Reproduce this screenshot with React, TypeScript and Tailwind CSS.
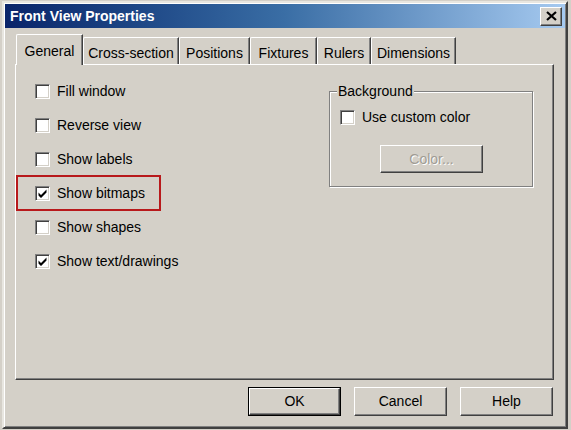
import React from 'react';

const FONT = { fontFamily: '"Liberation Sans", Arial, sans-serif' };

function Check({ checked }: { checked?: boolean }) {
  return (
    <span className="flex h-[15px] w-[15px] shrink-0 items-center justify-center border border-t-[#808080] border-l-[#808080] border-b-white border-r-white bg-white shadow-[inset_1px_1px_0_#404040,inset_-1px_-1px_0_#d4d0c8]">
      {checked && (
        <svg width="9" height="9" viewBox="0 0 9 9">
          <path d="M0.5 3.5 L3 6 L8.5 0.5 L8.5 3.5 L3 9 L0.5 6.5 Z" fill="#000" />
        </svg>
      )}
    </span>
  );
}

function Row({ label, checked, marked }: { label: string; checked?: boolean; marked?: boolean }) {
  return (
    <div className="relative flex h-[34px] items-center gap-[7px] text-[14px] text-black">
      {marked && (
        <span className="pointer-events-none absolute left-[-19px] top-[-1px] h-[36px] w-[145px] border-2 border-[#b8191b]" />
      )}
      <Check checked={checked} />
      <span>{label}</span>
    </div>
  );
}

function WinButton({ label, isDefault, disabled, className = '' }: { label: string; isDefault?: boolean; disabled?: boolean; className?: string }) {
  return (
    <div className={`${isDefault ? 'border border-black' : ''} ${className}`}>
      <div className="flex h-full w-full items-center justify-center border border-t-white border-l-white border-b-[#404040] border-r-[#404040] bg-[#d4d0c8] shadow-[inset_-1px_-1px_0_#808080] text-[14px]">
        <span className={disabled ? 'text-[#a09c94] [text-shadow:1px_1px_0_#fff]' : 'text-black'}>{label}</span>
      </div>
    </div>
  );
}

const tabs = [
  { name: 'General', w: 'w-[67px]' },
  { name: 'Cross-section', w: 'w-[96px]' },
  { name: 'Positions', w: 'w-[71px]' },
  { name: 'Fixtures', w: 'w-[67px]' },
  { name: 'Rulers', w: 'w-[54px]' },
  { name: 'Dimensions', w: 'w-[85px]' },
];

export default function App() {
  return (
    <div className="h-[430px] w-[571px] overflow-hidden bg-[#d4d0c8] pl-[2px] pt-[1px]" style={FONT}>
      <div className="flex h-[428px] w-[566px] flex-col border-2 border-t-[#e8e6e0] border-l-[#e8e6e0] border-b-[#404040] border-r-[#404040] bg-[#d4d0c8] p-[1px] shadow-[inset_1px_1px_0_#fff,inset_-1px_-1px_0_#808080]">
        {/* title bar */}
        <div className="flex h-[24px] shrink-0 items-center justify-between bg-gradient-to-r from-[#0a246a] via-[#3a6ea5] to-[#a6caf0] pl-[5px] pr-[3px]">
          <span className="text-[14px] font-bold text-white">Front View Properties</span>
          <div className="flex h-[19px] w-[22px] items-center justify-center border border-t-white border-l-white border-b-[#404040] border-r-[#404040] bg-[#d4d0c8] shadow-[inset_-1px_-1px_0_#808080]">
            <svg width="11" height="10" viewBox="0 0 11 10">
              <path d="M1 1 L10 9 M10 1 L1 9" stroke="#000" strokeWidth="2.2" />
            </svg>
          </div>
        </div>

        <div className="flex flex-col pl-[10px] pt-[6px]">
          {/* tabs */}
          <div className="relative z-10 flex h-[30px] items-end pl-[1px]">
            {tabs.map((t, i) =>
              i === 0 ? (
                <div
                  key={t.name}
                  className={`${t.w} -mb-px flex h-[31px] items-center justify-center rounded-tl-[2px] border-l border-t border-r border-l-white border-t-white border-r-[#404040] bg-[#d4d0c8] pt-[2px] text-[14px] shadow-[inset_-1px_0_0_#808080]`}
                >
                  {t.name}
                </div>
              ) : (
                <div
                  key={t.name}
                  className={`${t.w} flex h-[27px] items-center justify-center rounded-tl-[2px] border-l border-t border-r border-l-white border-t-white border-r-[#404040] bg-[#d4d0c8] pt-[4px] text-[14px] shadow-[inset_-1px_0_0_#808080]`}
                >
                  {t.name}
                </div>
              )
            )}
          </div>

          {/* panel */}
          <div className="flex h-[316px] w-[539px] border border-t-white border-l-white border-b-[#404040] border-r-[#404040] shadow-[inset_-1px_-1px_0_#808080]">
            <div className="flex w-[313px] shrink-0 flex-col pl-[19px] pt-[9px]">
              <Row label="Fill window" />
              <Row label="Reverse view" />
              <Row label="Show labels" />
              <Row label="Show bitmaps" checked marked />
              <Row label="Show shapes" />
              <Row label="Show text/drawings" checked />
            </div>

            <fieldset className="mt-[16px] h-[106px] w-[204px] border border-[#808080] pl-[10px] shadow-[inset_1px_1px_0_#fff,1px_1px_0_#fff]">
              <legend className="ml-[-3px] bg-[#d4d0c8] px-[1px] text-[14px]">Background</legend>
              <div className="flex items-center gap-[7px] pt-[5px] text-[14px]">
                <Check />
                <span>Use custom color</span>
              </div>
              <div className="pl-[40px] pt-[17px]">
                <WinButton label="Color..." disabled className="h-[28px] w-[103px]" />
              </div>
            </fieldset>
          </div>

          {/* buttons */}
          <div className="flex w-[539px] justify-end gap-[13px] pr-[1px] pt-[7px]">
            <WinButton label="OK" isDefault className="h-[29px] w-[93px]" />
            <WinButton label="Cancel" className="h-[29px] w-[93px]" />
            <WinButton label="Help" className="h-[29px] w-[93px]" />
          </div>
        </div>
      </div>
    </div>
  );
}
